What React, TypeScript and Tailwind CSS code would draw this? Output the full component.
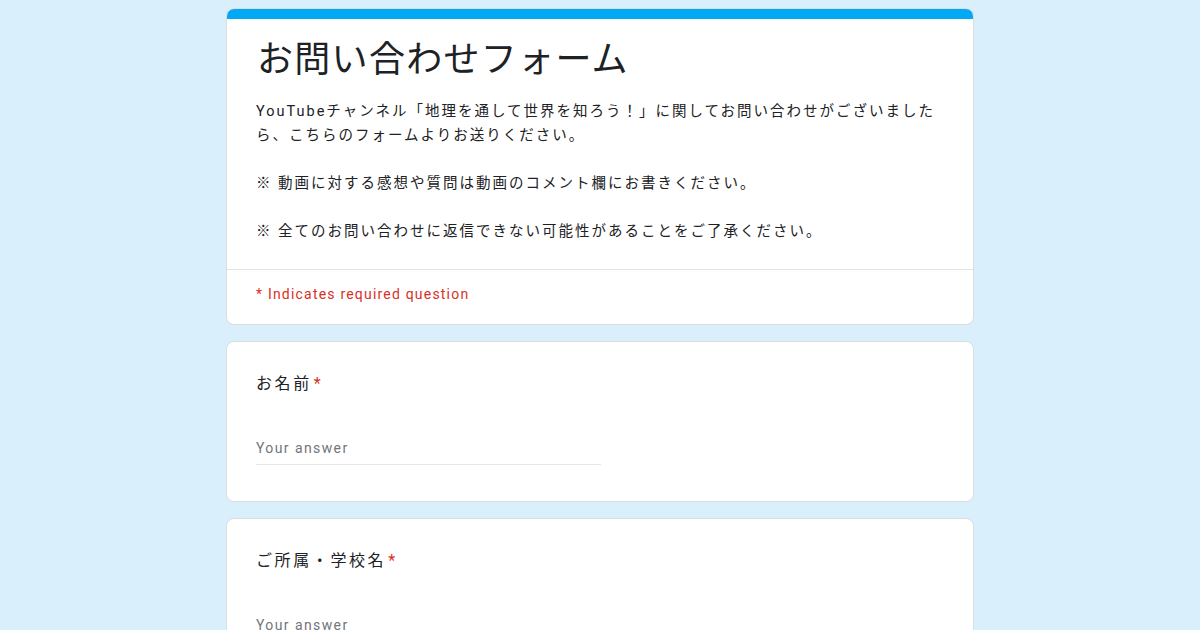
import React from "react";

const font = { fontFamily: 'Roboto, "Noto Sans CJK JP", sans-serif' };

function Question({ label }: { label: string }) {
  return (
    <div className="bg-white border border-[#dadce0] rounded-lg px-[29px] pt-[30px] pb-[36px]">
      <div className="text-[16px] leading-[24px] tracking-[2.6px] text-[#202124]">
        {label}
        <span className="text-[#d93025] ml-[2px]">*</span>
      </div>
      <div className="mt-[40px] w-[345px] border-b border-[#e6e6e6] pb-[4px]">
        <div className="text-[14px] leading-[24px] tracking-[1.4px] text-[#70757a]">
          Your answer
        </div>
      </div>
    </div>
  );
}

export default function App() {
  return (
    <div className="min-h-[630px] bg-[#d9effb] pt-[8px] pb-[40px]" style={font}>
      <div className="w-[748px] mx-auto flex flex-col gap-[16px]">
        <div className="bg-white border border-[#dadce0] rounded-lg overflow-hidden">
          <div className="h-[10px] bg-[#03a9f4]" />
          <div className="px-[29px] pt-[17px] pb-[25px]">
            <h1 className="text-[36px] leading-[48px] tracking-[1.3px] text-[#202124] font-normal pl-[1px]">
              お問い合わせフォーム
            </h1>
            <div className="mt-[16px] text-[14.5px] leading-[24px] tracking-[2px] text-[#202124]">
              <p>
                YouTubeチャンネル「地理を通して世界を知ろう！」に関してお問い合わせがございましたら、こちらのフォームよりお送りください。
              </p>
              <p className="h-[24px]" />
              <p>※ 動画に対する感想や質問は動画のコメント欄にお書きください。</p>
              <p className="h-[24px]" />
              <p>※ 全てのお問い合わせに返信できない可能性があることをご了承ください。</p>
            </div>
          </div>
          <div className="border-t border-[#e4e4e4] px-[29px] pt-[12px] pb-[18px]">
            <div className="text-[14px] leading-[24px] tracking-[1.2px] text-[#d93025]">
              * Indicates required question
            </div>
          </div>
        </div>
        <Question label="お名前" />
        <Question label="ご所属・学校名" />
      </div>
    </div>
  );
}
